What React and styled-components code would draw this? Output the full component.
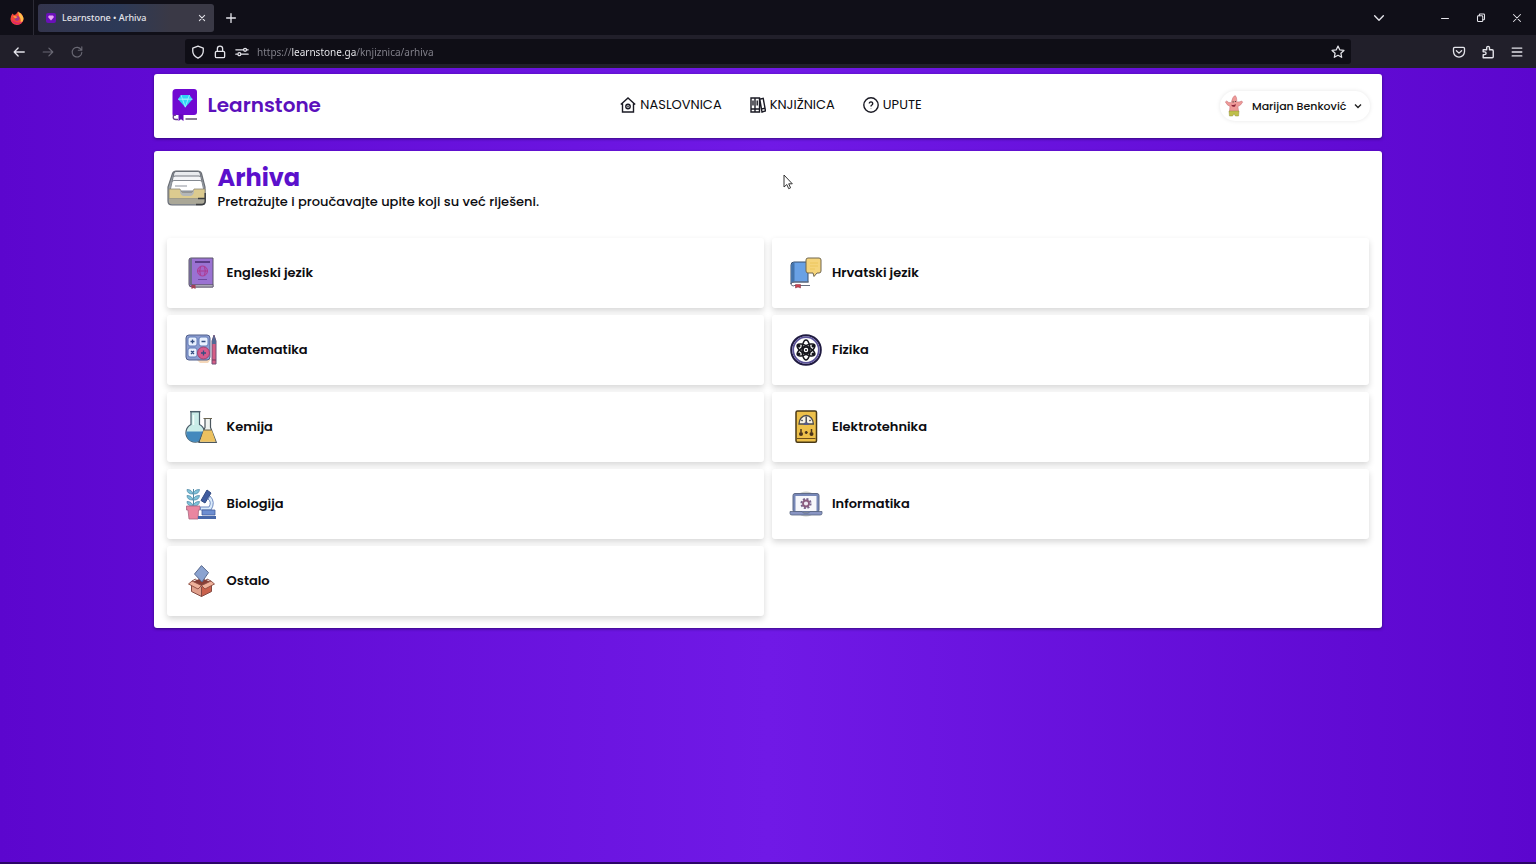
import React, { useState } from "react";
import styled, { createGlobalStyle } from "styled-components";

function App() {
  return (
    <Window>
      <GlobalStyle />
      <Browser />
      <Page>
        <Navbar />
        <Archive />
      </Page>
      <Pointer viewBox="0 0 10 16" aria-hidden="true">
        <path
          d="M1 1v12l2.8-2.5 1.9 4.2 1.9-.9-1.9-4H9.300z"
          fill="#fff"
          stroke="#333"
        />
      </Pointer>
    </Window>
  );
}

export default App;

function Browser() {
  const [url, setUrl] = useState("https://learnstone.ga/knjiznica/arhiva");

  return (
    <header>
      <TabBar>
        <Pinned>
          <FirefoxIcon />
        </Pinned>
        <Tab>
          <svg width="10" height="10" viewBox="0 0 10 10" aria-hidden="true">
            <rect width="10" height="10" rx="2" fill="#6a10b8" />
            <path d="M3 2.500h4l1 1.500-3 3.500-3-3.500z" fill="#e7a4f5" />
          </svg>
          <TabTitle>Learnstone • Arhiva</TabTitle>
          <ChromeButton aria-label="Close tab" $size={16}>
            <Line viewBox="0 0 16 16">
              <path d="M5 5l6 6M11 5l-6 6" />
            </Line>
          </ChromeButton>
        </Tab>
        <ChromeButton aria-label="New tab" $size={34}>
          <Line viewBox="0 0 16 16" $weight={1.5}>
            <path d="M8 3v10M3 8h10" />
          </Line>
        </ChromeButton>
        <WindowButtons>
          <ChromeButton aria-label="List all tabs" $size={36}>
            <Line viewBox="0 0 16 16" $weight={1.6}>
              <path d="M3 5.500L8 10.500 13 5.500" />
            </Line>
          </ChromeButton>
          <Gap />
          <ChromeButton aria-label="Minimize" $size={36}>
            <Line viewBox="0 0 16 16">
              <path d="M4 8.500h8" />
            </Line>
          </ChromeButton>
          <ChromeButton aria-label="Restore" $size={36}>
            <Line viewBox="0 0 16 16">
              <rect x="4" y="5.500" width="6" height="6.500" rx="1" />
              <path d="M6 5.500V4.500q0-1 1-1h4q1 0 1 1v4.500q0 1-1 1h-1" />
            </Line>
          </ChromeButton>
          <ChromeButton aria-label="Close" $size={36}>
            <Line viewBox="0 0 16 16">
              <path d="M4 4l8 8M12 4l-8 8" />
            </Line>
          </ChromeButton>
        </WindowButtons>
      </TabBar>
      <Toolbar>
        <ToolGroup>
          <ChromeButton aria-label="Back" $size={29}>
            <Line viewBox="0 0 16 16" $weight={1.5}>
              <path d="M14 8H2.500M7 3.500L2.500 8 7 12.500" />
            </Line>
          </ChromeButton>
          <ChromeButton aria-label="Forward" $size={29} disabled>
            <Line viewBox="0 0 16 16" $weight={1.300}>
              <path d="M2.500 8H13.500M9 3.500L13.500 8 9 12.500" />
            </Line>
          </ChromeButton>
          <ChromeButton aria-label="Reload" $size={29} disabled>
            <Line viewBox="0 0 16 16" $weight={1.300}>
              <path d="M12.800 5.500A5.500 5.500 0 1 0 13.500 8.500M13.500 2v4h-4" />
            </Line>
          </ChromeButton>
        </ToolGroup>
        <AddressBar>
          <Line viewBox="0 0 16 16" $weight={1.500}>
            <path d="M8 1.200L14 3.500V7c0 3.800-2.900 6.300-6 8C4.900 13.300 2 10.800 2 7V3.500z" />
          </Line>
          <Line viewBox="0 0 16 16" $weight={1.500}>
            <rect x="2.700" y="7.200" width="10.600" height="7.300" rx="1.500" />
            <path d="M5 7V4.200a3 3 0 0 1 6 0V7" />
          </Line>
          <Line viewBox="0 0 16 16" $weight={1.500}>
            <path d="M1 5.500h8M14 5.500h1M1 10.500h1.500M7.500 10.500H15" />
            <circle cx="11.500" cy="5.500" r="1.700" />
            <circle cx="5" cy="10.500" r="1.700" />
          </Line>
          <UrlInput
            type="text"
            aria-label="Address"
            value={url}
            onChange={(e) => setUrl(e.target.value)}
          />
          <ChromeButton aria-label="Bookmark this page" $size={20}>
            <Line viewBox="0 0 16 16" $weight={1.400}>
              <path d="M8 1.300l2.100 4.300 4.700.6-3.500 3.200.9 4.700L8 11.800l-4.200 2.300.9-4.700-3.500-3.200 4.700-.6z" />
            </Line>
          </ChromeButton>
        </AddressBar>
        <ToolGroup $end>
          <ChromeButton aria-label="Save to Pocket" $size={29}>
            <Line viewBox="0 0 16 16" $weight={1.500}>
              <path d="M3 2.700h10q1.300 0 1.300 1.300V7.500a6.300 6.300 0 0 1-12.600 0V4Q1.700 2.700 3 2.700zM5 6.500l3 2.800 3-2.800" />
            </Line>
          </ChromeButton>
          <ChromeButton aria-label="Extensions" $size={29}>
            <Line viewBox="0 0 16 16" $weight={1.600}>
              <path d="M2.500 5.500H6.500V3.200a1.600 1.600 0 0 1 3.200 0v2.300h3q1.300 0 1.300 1.300v6.500q0 1.200-1.200 1.200H2.500v-3.500h1.700a1.600 1.600 0 0 0 0-3.200H2.500z" />
            </Line>
          </ChromeButton>
          <ChromeButton aria-label="Menu" $size={29}>
            <Line viewBox="0 0 16 16" $weight={1.500}>
              <path d="M2.500 3.500h11M2.500 8h11M2.500 12.500h11" />
            </Line>
          </ChromeButton>
        </ToolGroup>
      </Toolbar>
    </header>
  );
}

function Navbar() {
  return (
    <NavCard>
      <Brand href="#naslovnica">
        <LogoIcon />
        Learnstone
      </Brand>
      <NavLinks>
        <NavLink href="#naslovnica">
          <NavIcon viewBox="0 0 16 16">
            <path d="M.8 7.500L8 1l7.200 6.500M2.500 6.500V15h11V6.500" />
            <circle cx="8" cy="9.500" r="2.200" />
            <circle cx="8" cy="9.500" r=".3" />
          </NavIcon>
          NASLOVNICA
        </NavLink>
        <NavLink href="#knjiznica">
          <NavIcon viewBox="0 0 16 16">
            <path d="M1 1h4v14H1zM5 1h4.500v14H5zM1 12h8.500M3 3.500v5M7.200 3.500v5M9.800 2.200l3.400-.9L15.500 14l-3.500 1zM11.600 12l3.200-.8" />
          </NavIcon>
          KNJIŽNICA
        </NavLink>
        <NavLink href="#upute">
          <NavIcon viewBox="0 0 16 16">
            <circle cx="8" cy="8" r="7.200" />
            <path d="M6.300 6.500a1.700 1.700 0 1 1 2.600 1.500Q8 8.500 8 9.400M8 11.200v.4" />
          </NavIcon>
          UPUTE
        </NavLink>
      </NavLinks>
      <UserButton>
        <AvatarIcon />
        Marijan Benković
        <svg width="8" height="8" viewBox="0 0 8 8" aria-hidden="true">
          <path d="M1 2.500l3 3 3-3" fill="none" stroke="#222" strokeWidth="1.400" />
        </svg>
      </UserButton>
    </NavCard>
  );
}

const subjects = [
  { name: "Engleski jezik", Icon: EnglishIcon },
  { name: "Hrvatski jezik", Icon: CroatianIcon },
  { name: "Matematika", Icon: MathIcon },
  { name: "Fizika", Icon: PhysicsIcon },
  { name: "Kemija", Icon: ChemistryIcon },
  { name: "Elektrotehnika", Icon: ElectricIcon },
  { name: "Biologija", Icon: BiologyIcon },
  { name: "Informatika", Icon: ComputerIcon },
  { name: "Ostalo", Icon: OtherIcon },
];

function Archive() {
  return (
    <Panel>
      <PanelHeader>
        <ArchiveIcon />
        <div>
          <Title>Arhiva</Title>
          <Subtitle>Pretražujte i proučavajte upite koji su već riješeni.</Subtitle>
        </div>
      </PanelHeader>
      <SubjectGrid>
        {subjects.map(({ name, Icon }) => (
          <SubjectCard href="#predmet" key={name}>
            <Icon />
            {name}
          </SubjectCard>
        ))}
      </SubjectGrid>
    </Panel>
  );
}

function FirefoxIcon() {
  return (
    <svg width="14" height="14" viewBox="0 0 14 14" aria-hidden="true">
      <path d="M2.500 2.500L4 4l2-.8 2-2.700 1 2 2-.3Q13.500 5 13.500 8A6.500 6 0 0 1 .5 8Q.5 5 2.500 2.500z" fill="#f4483a" />
      <path d="M8 .5q4 2 5.500 6.500Q13.500 11 10 12.500 12 9 9 5z" fill="#ffbf4a" />
      <path d="M.6 8q2 5 8 5.500Q11.500 13 13 10 9 13 5.500 11 2 10 .6 8z" fill="#e0246a" />
      <circle cx="7" cy="7.500" r="2.400" fill="#a23a8c" />
      <path d="M3 5q3-.5 4.500 1.200L5 7.500z" fill="#ff9a3c" />
    </svg>
  );
}

function LogoIcon() {
  return (
    <svg width="26" height="32" viewBox="0 0 26 32" aria-hidden="true">
      <path d="M4 0h18q3 0 3 3V23q0 3-3 3H4q-2 0-2.500 2Q.5 27 .5 25V3.500Q.5 0 4 0z" fill="#7009d2" />
      <path d="M4 26q-2.800 0-2.800 2.200T4 30.500h2" fill="none" stroke="#6a3a90" strokeWidth="1.300" />
      <path d="M6.500 25.500h5V32L9 30.300 6.500 32z" fill="#6209b8" />
      <path d="M13.500 30H25" stroke="#4a3a58" strokeWidth="1.300" />
      <path d="M9 6h8.500l3 4.200-7.200 8-7.300-8z" fill="#2fd4f5" />
      <path d="M9 6l1.500 4.200h5.500L17.500 6M6 10.200h14.500M10.500 10.200l2.800 8 2.700-8" fill="none" stroke="#a5f3ff" strokeWidth=".8" />
    </svg>
  );
}

function AvatarIcon() {
  return (
    <svg width="20" height="24" viewBox="0 0 22 24" aria-hidden="true">
      <path d="M12 .5q2.300 1 2 7Q17 8 19.500 6.500l1 1.300Q18 12 15.300 12.500L16 18H6l.6-5.500Q3 11 1.500 7.500L3 6.500Q5 9 8 8.300 9.500 1.500 12 .5z" fill="#ee9a98" stroke="#c56e76" strokeWidth=".6" />
      <path d="M5.500 17.500h11L16 23h-3.500L11 20.500 9.500 23H6z" fill="#bfc04a" stroke="#8b8a38" strokeWidth=".5" />
      <path d="M8 10.500q3 1 5-.8-.2 3.500-2.700 3.200-2-.3-2.300-2.400z" fill="#8a2338" />
      <path d="M9.500 7.500h1M12 7h1" stroke="#333" strokeWidth="1.200" />
    </svg>
  );
}

function ArchiveIcon() {
  return (
    <svg width="40" height="40" viewBox="0 0 40 40" aria-hidden="true">
      <path d="M9 3h22q2.500 0 3.500 2.500L38 19v14q0 4-4 4H5q-4 0-4-4V19L5.500 5.500Q6.500 3 9 3z" fill="#9aa0a8" stroke="#6a6e75" strokeWidth="1.200" />
      <path d="M9 3.500h22q1.500 0 2 1.500l1 4H6l1-4q.5-1.500 2-1.500z" fill="#e9ebee" stroke="#6b7078" />
      <path d="M8 8h24q1.500 0 2 1.500l1 4.500H5l1-4.500Q6.500 8 8 8z" fill="#f4f5f7" stroke="#747981" />
      <path d="M7 12.500h26q1.500 0 2 1.500l2 9H3l2-9q.5-1.500 2-1.500z" fill="#fff" stroke="#858a91" />
      <path d="M8 18h12" stroke="#a7abb2" strokeWidth="1.300" />
      <path d="M2 21h11q1 4 3.500 4h7q2.500 0 3.500-4h11v9.500H2z" fill="#dccb8f" stroke="#8b8775" strokeWidth=".8" />
      <path d="M13 21q1 4 3.500 4h7q2.500 0 3.500-4v3q-1 4-4 4h-6q-3 0-4-4z" fill="#b4b7b9" />
      <path d="M2 30.500h36V33q0 3-3 3H5q-3 0-3-3z" fill="#aaa797" />
      <path d="M29 36.500h6q3.200 0 3.200-3.500v-8M31 30.500h7" fill="none" stroke="#3b3d40" strokeWidth="1.400" />
    </svg>
  );
}

function EnglishIcon() {
  return (
    <SubjectIcon>
      <path d="M6 1h22v29H7q-3 0-3-2.500V3q0-2 2-2z" fill="#9a72d2" stroke="#5a5468" />
      <path d="M4.500 3q0-2 2.500-2v27H4.500z" fill="#6c7088" />
      <path d="M7 27.500h21V30H7z" fill="#aaa7b5" stroke="#504665" strokeWidth=".6" />
      <path d="M10 5h15" stroke="#5b3c87" strokeWidth="2" />
      <circle cx="17.500" cy="14" r="5" fill="#a564c8" stroke="#b03a91" />
      <path d="M12.500 14h10M15.500 9.500q-1.500 4.500 0 9M19.500 9.500q1.500 4.500 0 9" fill="none" stroke="#a83a91" />
      <path d="M13 22.500h9" stroke="#70489f" />
      <path d="M6.500 28h4v4l-2-1-2 1z" fill="#a34258" />
    </SubjectIcon>
  );
}

function CroatianIcon() {
  return (
    <SubjectIcon>
      <path d="M4 5h14v20H4q-3 0-3 2V8q0-3 3-3z" fill="#69a1e5" stroke="#39506f" />
      <path d="M1.500 8q0-2.500 3-2.500V25q-3 0-3 2z" fill="#4374ad" />
      <path d="M4 25h15M4 29q-3 0-3-2t3-2M4 28.500h16" fill="none" stroke="#687080" />
      <path d="M5.500 27.500h5V31l-2.500-1-2.500 1z" fill="#cb4250" stroke="#803040" strokeWidth=".5" />
      <path d="M18 1h11q2 0 2 2v11q0 2-2 2h-2l-3 3.500-1-3.500h-5q-2 0-2-2V3q0-2 2-2z" fill="#f5d47b" stroke="#70664f" />
      <path d="M20 6h8M20 9h8M20 12h5" stroke="#ecc65d" />
    </SubjectIcon>
  );
}

function MathIcon() {
  return (
    <SubjectIcon>
      <path d="M11 25h15l-3 4h-8z" fill="#f4d7ba" />
      <rect x="1" y="1" width="24" height="25" rx="3" fill="#8c9cd0" stroke="#50608c" />
      <rect x="3" y="3" width="9" height="9" rx="2" fill="#e9f1ff" stroke="#637fb9" />
      <rect x="14" y="3" width="9" height="9" rx="2" fill="#e9f1ff" stroke="#637fb9" />
      <rect x="3" y="14" width="9" height="9" rx="2" fill="#e9f1ff" stroke="#637fb9" />
      <circle cx="18.500" cy="19" r="6" fill="#d65a8d" stroke="#a1426f" />
      <path d="M5.500 7.500h4M7.500 5.500v4M16.500 7.500h4M6 17l3 3M9 17l-3 3M16 19h5M18.500 16.500v5" stroke="#344e82" strokeWidth="1.300" />
      <path d="M27 7l2-6 2 6v23h-4z" fill="#d65d84" stroke="#705077" />
      <path d="M27 7l2-6 2 6v3h-4z" fill="#536894" />
      <path d="M27 26h4" stroke="#743c61" />
    </SubjectIcon>
  );
}

function PhysicsIcon() {
  return (
    <SubjectIcon>
      <circle cx="16" cy="16" r="14.800" fill="#fff" stroke="#1f1a40" strokeWidth="2" />
      <circle cx="16" cy="16" r="12.800" fill="none" stroke="#5a5298" strokeWidth="1.800" />
      <g fill="none" stroke="#15151c" strokeWidth="1.500">
        <ellipse cx="16" cy="16" rx="4" ry="10" />
        <ellipse cx="16" cy="16" rx="4" ry="10" transform="rotate(60 16 16)" />
        <ellipse cx="16" cy="16" rx="4" ry="10" transform="rotate(120 16 16)" />
      </g>
      <circle cx="16" cy="16" r="3" fill="#fff" stroke="#15151c" strokeWidth="1.500" />
      <g fill="#15151c">
        <circle cx="16" cy="16" r="1" />
        <circle cx="9" cy="12" r="1.500" />
        <circle cx="23" cy="12" r="1.500" />
        <circle cx="9" cy="20" r="1.500" />
        <circle cx="23" cy="20" r="1.500" />
      </g>
    </SubjectIcon>
  );
}

function ChemistryIcon() {
  return (
    <SubjectIcon>
      <path d="M6 .6V13.500A9.300 9.300 0 1 0 14.500 13.500V.6z" fill="#c9ece8" stroke="#4a5e6b" strokeWidth="1.200" />
      <path d="M1.300 20.500h17.500Q19 31 10 31T1.300 20.500z" fill="#4389bd" />
      <path d="M5 .6h10.500" stroke="#4a5e6b" strokeWidth="1.300" />
      <path d="M20 7.500v9L14 31.400h17.300L25.500 16.500v-9z" fill="#eef3f0" stroke="#4b565e" strokeWidth="1.200" />
      <path d="M18.700 19h8l4 11.700H15z" fill="#ecc15f" />
      <path d="M18.500 19H27M18.500 7.500h8.500" stroke="#6b6450" />
      <path d="M8.500 4v10" stroke="#f0fbfa" strokeWidth="1.500" />
    </SubjectIcon>
  );
}

function ElectricIcon() {
  return (
    <SubjectIcon>
      <rect x="6" y="0" width="20.500" height="31.200" rx="1.500" fill="#edc04a" stroke="#493816" strokeWidth="1.500" />
      <path d="M9 13a7.200 8.500 0 1 1 14.400 0z" fill="#f8f2e2" stroke="#4c4b4c" strokeWidth="1.300" />
      <path d="M11.500 9l1 1M20.500 9l-1 1M16.200 5.500v1.500M16.200 7v6" stroke="#303545" strokeWidth="1.300" />
      <path d="M13.500 14a2.700 2.700 0 0 1 5.400 0z" fill="#545987" />
      <path d="M11 18v3M21.500 18v3M16.200 20v3M14.800 21.500h3" stroke="#4b351d" strokeWidth="1.500" />
      <circle cx="11" cy="23" r="2" fill="#4b351d" />
      <circle cx="21.500" cy="23" r="2" fill="#4b351d" />
      <path d="M7 27.500h18.500" stroke="#6e4f1c" />
    </SubjectIcon>
  );
}

function BiologyIcon() {
  return (
    <SubjectIcon>
      <path d="M8.500 1v17" stroke="#4e89a6" />
      <path d="M8 6Q2 6 2 1.500q5 0 6 4.500 1-4.500 6.500-4.500Q14 6 9 6zM8 12Q2 12 2 7.500q5 0 6 4.500 1-4.500 6.500-4.500Q14 12 9 12zM8 18Q2 18 2 13.500q5 0 6 4.500 1-4.500 6.500-4.500Q14 18 9 18z" fill="#7fc3da" stroke="#568da9" strokeWidth=".8" />
      <path d="M1.500 18H15v4h-1.500L13 31H4l-1-9H1.500z" fill="#ea86a0" stroke="#a96680" strokeWidth=".8" />
      <path d="M22 2l4 3-6 10-4-2.500z" fill="#3f5c9e" stroke="#334b82" />
      <path d="M25 8q6 6 1 14H15.500v-3H24q3-5-1-8z" fill="#d9eafa" stroke="#718bc1" />
      <path d="M17 22h13v5H17z" fill="#6d8ed1" stroke="#455e9c" strokeWidth=".8" />
      <path d="M13 28h18v3H13z" fill="#4767a9" />
    </SubjectIcon>
  );
}

function ComputerIcon() {
  return (
    <SubjectIcon>
      <circle cx="16" cy="16" r="12.500" fill="#cdd1cd" />
      <rect x="3" y="5.500" width="26" height="18.500" rx="2" fill="#7788b8" stroke="#5f6a88" />
      <path d="M5.500 8h21V23h-21z" fill="#f6f7fb" />
      <circle cx="16" cy="15.500" r="4.600" fill="none" stroke="#76648d" strokeWidth="2" strokeDasharray="2 1.600" />
      <circle cx="16" cy="15.500" r="3" fill="#efeaf4" stroke="#8a5b7e" strokeWidth="1.800" />
      <path d="M0 23.500h12l1.500 1.500h5l1.500-1.500h12v2q0 1.500-2 1.500H2q-2 0-2-1.500z" fill="#8995c3" stroke="#586580" strokeWidth=".8" />
    </SubjectIcon>
  );
}

function OtherIcon() {
  return (
    <SubjectIcon>
      <path d="M7 17l9.500-4 9.500 4-9.500 4.500z" fill="#873e37" />
      <path d="M16.500 .6l7 7L17 17l-7.500-8z" fill="#8ba3d0" stroke="#5a698c" />
      <path d="M6.500 18l10 4v9.500l-10-5z" fill="#e0a08c" stroke="#844b43" />
      <path d="M26.500 18l-10 4v9.500l10-5z" fill="#c9614c" stroke="#844b43" />
      <path d="M7 16l9.500 4.500-3.500 3.500-9.500-5zM26 16l-9.500 4.500 3.500 3.500 9.500-5z" fill="#eeb19b" stroke="#8b4c40" strokeWidth=".9" />
      <path d="M7 16l3.500-2 2.500 3M26 16l-4-2-2 3" fill="none" stroke="#7c4037" strokeWidth=".9" />
    </SubjectIcon>
  );
}

const GlobalStyle = createGlobalStyle`
  * {
    box-sizing: border-box;
  }

  body {
    margin: 0;
    font-family: Poppins, Inter, sans-serif;
    color: #0c0c10;
  }

  button,
  input {
    font-family: inherit;
    border: none;
    padding: 0;
    background: none;
  }

  a {
    color: inherit;
    text-decoration: none;
  }
`;

const Window = styled.div`
  position: relative;
  display: flex;
  flex-direction: column;
  min-height: 100vh;
`;

const TabBar = styled.div`
  display: flex;
  align-items: center;
  height: 35px;
  background-color: #100f18;
  color: #e4e4ea;
  font-family: "Noto Sans", sans-serif;
`;

const Pinned = styled.div`
  display: flex;
  align-items: center;
  justify-content: center;
  width: 34px;
  height: 100%;
  border-right: 1px solid #2c2b36;
  margin-right: 4px;
`;

const Tab = styled.div`
  display: flex;
  align-items: center;
  gap: 6px;
  width: 176px;
  height: 28px;
  padding: 0 4px 0 8px;
  border-radius: 3px;
  background: linear-gradient(to right, #34354d, #2c3957 45%, #3a3946 75%);
`;

const TabTitle = styled.span`
  flex: 1;
  font-size: 9px;
  font-weight: 500;
  white-space: nowrap;
`;

const WindowButtons = styled.div`
  display: flex;
  margin-left: auto;
  padding-right: 1px;
`;

const Gap = styled.div`
  width: 30px;
`;

const ChromeButton = styled.button`
  display: flex;
  align-items: center;
  justify-content: center;
  width: ${(props) => props.$size}px;
  height: 28px;
  color: #e4e4ea;
  cursor: pointer;

  &:disabled {
    color: #6a6974;
  }
`;

const Line = styled.svg.attrs({ "aria-hidden": true })`
  flex: none;
  width: 14px;
  height: 14px;
  fill: none;
  stroke: currentColor;
  stroke-width: ${(props) => props.$weight || 1.2};
  stroke-linecap: round;
  stroke-linejoin: round;
`;

const Toolbar = styled.div`
  display: grid;
  grid-template-columns: 185px 1fr 185px;
  align-items: center;
  height: 33px;
  background-color: #211f2a;
`;

const ToolGroup = styled.div`
  display: flex;
  padding: 0 5px 0 4px;
  justify-content: ${(props) => (props.$end ? "flex-end" : "flex-start")};
`;

const AddressBar = styled.div`
  display: flex;
  align-items: center;
  gap: 8px;
  height: 25px;
  padding: 0 3px 0 6px;
  border-radius: 3px;
  background-color: #0f0e16;
  color: #e4e4ea;
`;

/* The host name is brighter than the rest of the address */
const UrlInput = styled.input`
  flex: 1;
  min-width: 0;
  outline: none;
  color: #85848e;
  font-family: "Noto Sans", sans-serif;
  font-size: 10px;
  background: linear-gradient(
    to right,
    #85848e 35px,
    #f4f4f8 35px 99px,
    #85848e 99px
  );
  background-clip: text;
  -webkit-text-fill-color: transparent;
`;

const Page = styled.main`
  flex: 1;
  padding: 6px 10% 24px;
  border-bottom: 2px solid #2c0568;
  background: linear-gradient(to right, #5c06ce, #7019e6 50%, #5c06ce);
`;

const NavCard = styled.div`
  display: grid;
  grid-template-columns: 1fr auto 1fr;
  align-items: center;
  height: 64px;
  padding: 0 12px 2px 18px;
  border-radius: 3px;
  background-color: white;
  box-shadow: 0 1px 3px rgba(20, 0, 60, 0.6);
`;

const Brand = styled.a`
  display: flex;
  align-items: center;
  justify-self: start;
  gap: 10px;
  color: #5b10bc;
  font-size: 20px;
  font-weight: 600;
`;

const NavLinks = styled.nav`
  display: flex;
  gap: 28px;
`;

const NavLink = styled.a`
  display: flex;
  align-items: center;
  gap: 4px;
  font-size: 13px;
`;

const NavIcon = styled.svg.attrs({ "aria-hidden": true })`
  width: 16px;
  height: 16px;
  fill: none;
  stroke: #1a1a24;
  stroke-width: 1.4;
`;

const UserButton = styled.button`
  display: flex;
  align-items: center;
  justify-self: end;
  gap: 8px;
  height: 30px;
  margin-top: 2px;
  padding: 0 8px 0 4px;
  border-radius: 15px;
  color: #111;
  font-size: 11px;
  font-weight: 500;
  box-shadow: 0 0 4px rgba(0, 0, 0, 0.1);
  cursor: pointer;
`;

const Panel = styled.section`
  margin-top: 13px;
  padding: 13px 13px 12px;
  border-radius: 3px;
  background-color: white;
  box-shadow: 0 1px 3px rgba(20, 0, 60, 0.6);
`;

const PanelHeader = styled.div`
  display: flex;
  align-items: center;
  gap: 11px;
  height: 48px;
  margin-bottom: 26px;
`;

const Title = styled.h1`
  margin: 0;
  color: #5b10cc;
  font-size: 24px;
  font-weight: 700;
  line-height: 28px;
`;

const Subtitle = styled.p`
  margin: 0;
  font-size: 13px;
  font-weight: 500;
  line-height: 20px;
`;

const SubjectGrid = styled.div`
  display: grid;
  grid-template-columns: 1fr 1fr;
  gap: 7px 8px;
`;

const SubjectCard = styled.a`
  display: flex;
  align-items: center;
  gap: 10px;
  height: 70px;
  padding: 0 18px;
  border-radius: 3px;
  background-color: white;
  font-size: 13px;
  font-weight: 600;
  box-shadow: 0 3px 6px rgba(0, 0, 0, 0.16);
`;

const SubjectIcon = styled.svg.attrs({
  viewBox: "0 0 32 32",
  "aria-hidden": true,
})`
  width: 32px;
  height: 32px;
  overflow: visible;
`;

const Pointer = styled.svg`
  position: absolute;
  top: 174px;
  left: 51%;
  width: 10px;
  height: 16px;
`;
